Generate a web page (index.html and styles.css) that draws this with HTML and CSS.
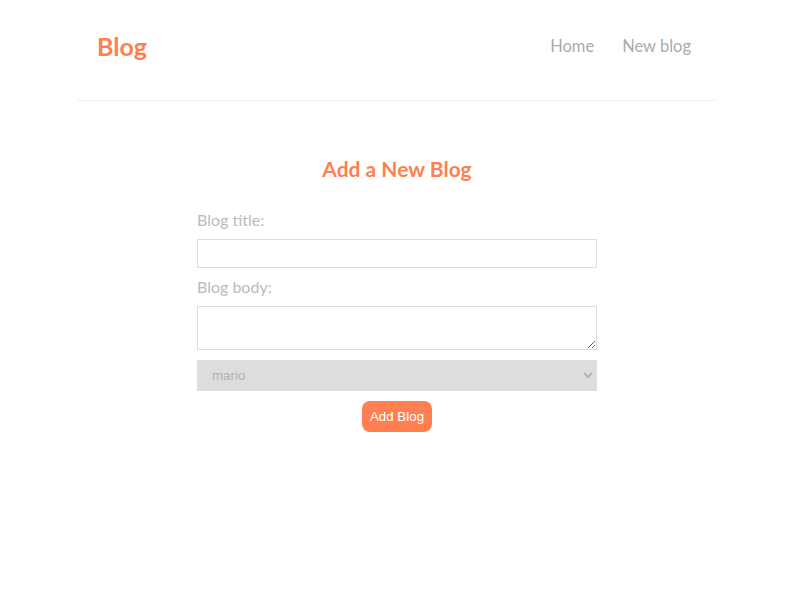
FILE: index.html
```html
<!DOCTYPE html>
<html lang="en">
<head>
<meta charset="utf-8">
<title>Blog</title>
<link rel="stylesheet" href="styles.css">
</head>
<body>
<div class="app">
  <nav class="navbar">
    <h1 class="brand">Blog</h1>
    <div class="links">
      <a href="#" class="nav-link">Home</a>
      <a href="#" class="nav-link">New blog</a>
    </div>
  </nav>
  <div class="content">
    <div class="create">
      <h2 class="create-title">Add a New Blog</h2>
      <form class="create-form">
        <label class="field-label">Blog title:</label>
        <input class="field field-input" type="text">
        <label class="field-label">Blog body:</label>
        <textarea class="field field-textarea"></textarea>
        <select class="field field-select">
          <option value="mario">mario</option>
          <option value="yoshi">yoshi</option>
        </select>
        <button type="button" class="submit-btn">Add Blog</button>
      </form>
    </div>
  </div>
</div>
</body>
</html>
```

FILE: styles.css
```css
* {
  margin: 0;
  box-sizing: border-box;
}

body {
  margin: 0 0 0 8px;
  background: #fff;
  font-family: "Lato", "Open Sans", sans-serif;
  color: #333;
}

.navbar {
  display: flex;
  align-items: center;
  max-width: 640px;
  height: 101px;
  margin: 0 auto;
  padding: 0 20px 9px;
  border-bottom: 1px solid #f2f2f2;
}

.brand {
  font-size: 25px;
  line-height: 28px;
  font-weight: 700;
  color: #ff7f50;
}

.links {
  margin-left: auto;
  display: flex;
}

.nav-link {
  margin-left: 16px;
  padding: 6px;
  font-size: 16.5px;
  line-height: 16px;
  color: #aaa;
  text-decoration: none;
}

.content {
  max-width: 640px;
  margin: 37px auto 40px;
  padding: 20px;
}

.create {
  max-width: 400px;
  margin: 0 auto;
  text-align: center;
}

.create-title {
  font-size: 21px;
  line-height: 21px;
  font-weight: 700;
  color: #ff7f50;
  margin-bottom: 32px;
}

.field-label {
  display: block;
  text-align: left;
  font-size: 16px;
  line-height: 18px;
  color: #bbb;
}

.field {
  display: block;
  width: 100%;
  margin: 10px 0;
  padding: 6px 10px;
  border: 1px solid #ddd;
  font: 13.333px "Liberation Sans", Arial, sans-serif;
}

.field-input {
  height: 29px;
}

.field-textarea {
  height: 44px;
  resize: vertical;
}

.field-select {
  height: 31px;
  background-color: #ddd;
  color: #b3b3b3;
}

.submit-btn {
  background: #ff7f50;
  color: #fff;
  border: 0;
  padding: 8px;
  border-radius: 8px;
  font: 13.333px/15px "Liberation Sans", Arial, sans-serif;
  cursor: pointer;
}
```
